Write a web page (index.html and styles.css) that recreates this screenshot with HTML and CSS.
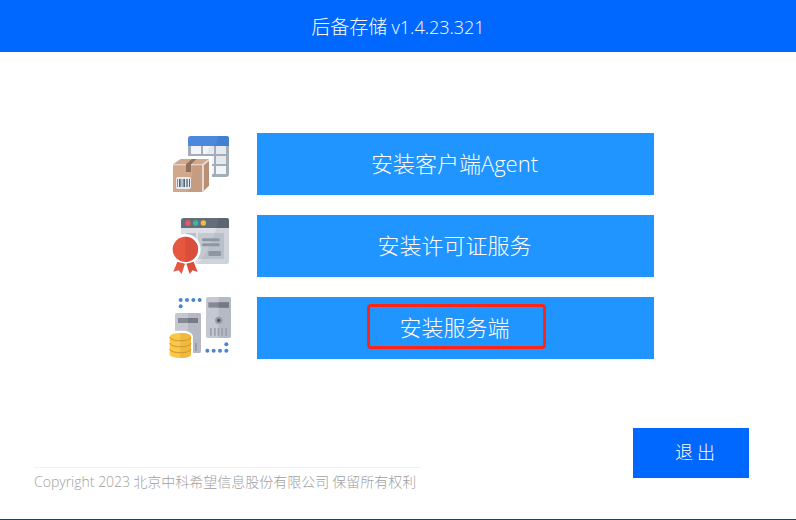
FILE: index.html
```html
<!DOCTYPE html>
<html lang="zh-CN">
<head>
<meta charset="utf-8">
<meta name="viewport" content="width=device-width, initial-scale=1">
<title>后备存储</title>
<link rel="stylesheet" href="styles.css">
</head>
<body>
<header class="titlebar"><h1 class="title">后备存储 <span class="version">v1.4.23.321</span></h1></header>
<main class="options">
  <div class="option">
    <svg class="icon" viewBox="24 21 192 192" aria-hidden="true">
      <path fill="#a3adb7" d="M84 60H207V147Q207 156 198 156H84Z"/>
      <path fill="#4a89dc" d="M84 63V41Q84 33 92 33H199Q207 33 207 41V63Z"/>
      <path fill="#4480d0" d="M176 33H199Q207 33 207 41V63H163Q172 51 176 33Z"/>
      <path fill="#f2f4f7" d="M93 63H123V87H93ZM129 63H162V87H129ZM168 63H198V87H168ZM129 93H162V117H129ZM168 93H198V117H168ZM129 123H162V147H129ZM168 123H198V147H168Z"/>
      <path fill="#e5e8ec" d="M149 63H162V87H140ZM168 63H198V87H168ZM168 93H198V117H168Z"/>
      <path fill="#fff" d="M30 93H156V156H147V210H30Z"/>
      <path fill="#d1a88c" d="M39 118L62 102H147L128 118V201H39Z"/>
      <path fill="#c59b82" d="M98 118H128V201H83Q98 164 98 118Z"/>
      <path fill="#b98e73" d="M128 118L147 102V182L128 201Z"/>
      <path fill="#ead3c6" d="M39 117H128V121H39Z"/>
      <path fill="#e8d9d0" d="M126 117L147 102V108L132 121V199L126 201Z"/>
      <path fill="#8e705d" d="M78 118L96 102H109L93 118V141H78Z"/>
      <rect x="48" y="156" width="45" height="36" rx="5" fill="#e6e9ed"/>
      <path fill="#52667b" d="M52 162H54V186H52ZM57 162H62V186H57ZM65 162H67V186H65ZM70 162H75V186H70ZM78 162H80V186H78ZM82 162H84V186H82ZM87 162H90V186H87Z"/>
    </svg>
    <button class="install" type="button">安装客户端<span class="latin">Agent</span></button>
  </div>
  <div class="option">
    <svg class="icon" viewBox="24 21 192 192" aria-hidden="true">
      <path fill="#dce0e6" d="M63 60H207V162Q207 171 198 171H63Z"/>
      <path fill="#ced3da" d="M169 63H207V162Q207 171 198 171H114Q150 130 169 63Z"/>
      <path fill="#656d78" d="M63 63V41Q63 33 71 33H199Q207 33 207 41V63Z"/>
      <path fill="#5d6570" d="M177 33H199Q207 33 207 41V63H169Z"/>
      <circle cx="84" cy="48" r="8" fill="#ed5565"/><circle cx="107" cy="48" r="8" fill="#37bc9b"/><circle cx="130" cy="48" r="8" fill="#f6bb42"/>
      <path fill="#b9c0c9" d="M78 78H108V156H78ZM114 78H192V156H114Z"/>
      <path fill="#c3c9d1" d="M114 78H164Q151 119 124 156H114Z"/>
      <path d="M130 98H175M130 113H175" stroke="#8e98a4" stroke-width="9" stroke-linecap="round"/>
      <rect x="145" y="132" width="38" height="15" rx="3" fill="#8e98a4"/>
      <circle cx="76" cy="127" r="46" fill="#fff"/>
      <path fill="#fff" d="M48 158H104L116 207H34Z"/>
      <path fill="#e6573f" d="M52 164L75 170L65 201L56 190L40 194Z"/>
      <path fill="#d94e3a" d="M79 170L101 164L113 195L98 190L89 201Z"/>
      <circle cx="76" cy="127" r="38" fill="#e6573f"/>
      <path fill="#d94f3c" d="M76 89A38 38 0 0 1 76 165Z"/>
    </svg>
    <button class="install" type="button">安装许可证服务</button>
  </div>
  <div class="option">
    <svg class="icon" viewBox="24 24 192 192" aria-hidden="true">
      <g fill="#4b86cb"><circle cx="62" cy="36" r="6"/><circle cx="81" cy="36" r="6"/><circle cx="100" cy="36" r="6"/><circle cx="119" cy="36" r="6"/><circle cx="62" cy="55" r="6"/><circle cx="199" cy="169" r="6"/><circle cx="142" cy="188" r="6"/><circle cx="161" cy="188" r="6"/><circle cx="180" cy="188" r="6"/><circle cx="199" cy="188" r="6"/></g>
      <rect x="138" y="27" width="75" height="123" rx="6" fill="#c5c8d1"/>
      <path fill="#b5b9c3" d="M176 27H207Q213 27 213 33V144Q213 150 207 150H176Z"/>
      <path fill="#848a94" d="M145 43H207V59H145Z"/><path fill="#747a84" d="M176 43H207V59H176Z"/>
      <circle cx="176" cy="97" r="11" fill="#949ba4"/><circle cx="176" cy="97" r="5" fill="#4d555f"/>
      <path fill="#99a0aa" d="M150 120H155V143H150ZM162 120H167V143H162ZM173 120H178V143H173ZM184 120H189V143H184ZM196 120H201V143H196Z"/>
      <rect x="45" y="75" width="78" height="120" rx="6" fill="#c5c8d1"/>
      <path fill="#b5b9c3" d="M84 75H117Q123 75 123 81V189Q123 195 117 195H84Z"/>
      <path fill="#858b95" d="M54 90H114V105H54Z"/><path fill="#757b85" d="M84 90H114V105H84Z"/>
      <path fill="#999fa9" d="M105 165H111V189H105Z"/>
      <path fill="#fff" d="M24 144Q27 128 61 128T99 144V210H24Z"/>
      <path fill="#fbc747" d="M29 147C29 131 93 131 93 147V199C93 214 29 214 29 199Z"/>
      <path fill="#f0b83d" d="M61 135Q93 135 93 147V199Q93 210 61 210Z"/>
      <path d="M29 147C30 162 92 162 93 147M29 165C30 180 92 180 93 165M29 183C30 198 92 198 93 183" fill="none" stroke="#cf9538" stroke-width="3"/>
    </svg>
    <button class="install" type="button"><span class="highlight">安装服务端</span></button>
  </div>
</main>
<footer class="footer">
  <p class="copyright"><span class="latin">Copyright 2023</span> 北京中科希望信息股份有限公司 保留所有权利</p>
  <button class="exit" type="button">退 出</button>
</footer>
</body>
</html>
```
FILE: styles.css
```css
* { box-sizing: border-box; }

body {
  margin: 0;
  min-height: 100vh;
  display: flex;
  flex-direction: column;
  background: #fff;
  border-bottom: 1px solid #004a8c;
  font-family: "Noto Sans CJK SC", sans-serif;
  font-weight: 300;
}

button {
  border: 0;
  color: #fff;
  font: inherit;
  cursor: pointer;
}

.titlebar {
  display: flex;
  align-items: center;
  justify-content: center;
  height: 52px;
  background: #0068ff;
  color: #fff;
}

.title {
  margin: 0;
  font-size: 19px;
  font-weight: 300;
  line-height: 28px;
}

.version {
  font-family: "Open Sans", sans-serif;
  font-size: 18px;
}

.options {
  display: grid;
  gap: 20px;
  padding: 81px 142px 0 168px;
}

.option {
  display: flex;
  align-items: center;
  gap: 25px;
  height: 62px;
}

.icon {
  flex: none;
  width: 64px;
  height: 64px;
}

.install {
  flex: 1;
  height: 62px;
  padding: 0 2px 4px 0;
  background: #2094ff;
  font-size: 22px;
}

.highlight {
  position: relative;
}

.highlight::after {
  content: "";
  position: absolute;
  inset: -6px -36px -7px -32px;
  border: 3px solid #ff2318;
  border-radius: 4px;
}

.footer {
  display: flex;
  justify-content: space-between;
  align-items: flex-end;
  margin-top: auto;
  padding: 0 47px 25px 34px;
}

.copyright {
  margin: 0;
  padding: 3px 4px 2px 0;
  border-top: 1px solid #f0f0f0;
  color: #a0a0a0;
  font-size: 14px;
  line-height: 20px;
}

.latin {
  font-family: "Open Sans", sans-serif;
}

.exit {
  width: 116px;
  height: 50px;
  margin-bottom: 16px;
  padding: 0 0 4px 8px;
  background: #0068ff;
  font-size: 18px;
}
```
